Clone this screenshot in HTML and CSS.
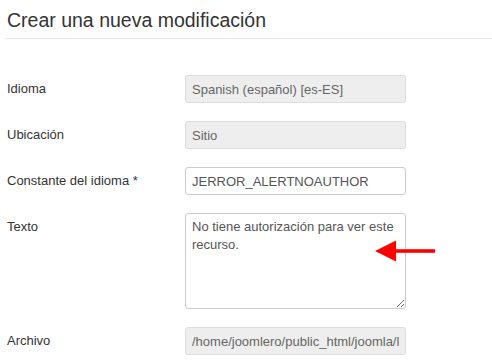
FILE: index.html
```
<!DOCTYPE html>
<html lang="es">
  <head>
    <meta charset="UTF-8" />
    <meta name="viewport" content="width=device-width, initial-scale=1.0" />
    <title>Crear una nueva modificación</title>
    <link rel="stylesheet" href="styles.css">
  </head>
  <body>
    <form class="override-form">
      <h2 class="form-title">Crear una nueva modificación</h2>

      <div class="control-group">
        <label class="control-label" for="language">Idioma</label>
        <div class="controls">
          <input type="text" id="language" class="field" value="Spanish (español) [es-ES]" disabled />
        </div>
      </div>

      <div class="control-group">
        <label class="control-label" for="client">Ubicación</label>
        <div class="controls">
          <input type="text" id="client" class="field" value="Sitio" disabled />
        </div>
      </div>

      <div class="control-group">
        <label class="control-label" for="key">Constante del idioma *</label>
        <div class="controls">
          <input type="text" id="key" class="field" value="JERROR_ALERTNOAUTHOR" />
        </div>
      </div>

      <div class="control-group">
        <label class="control-label" for="override">Texto</label>
        <div class="controls">
          <textarea id="override" class="field field-text">No tiene autorización para ver este recurso.</textarea>
          <!-- flecha roja encima del textarea -->
          <svg class="pointer" width="60" height="22" viewBox="0 0 60 22">
            <polygon points="0,11 21,0.5 21,21.5" fill="#ff0000" />
            <rect x="21" y="9.2" width="39" height="3.6" fill="#ff0000" />
          </svg>
        </div>
      </div>

      <div class="control-group">
        <label class="control-label" for="file">Archivo</label>
        <div class="controls">
          <input type="text" id="file" class="field" value="/home/joomlero/public_html/joomla/language/overrides/es-ES.override.ini" disabled />
        </div>
      </div>
    </form>
  </body>
</html>
```

FILE: styles.css
```
body {
  margin: 0;
  background: #fff;
  font-family: "Liberation Sans", Arial, sans-serif;
  color: #333;
}

.override-form {
  padding-left: 6px;
}

.form-title {
  margin: 0 0 36px;
  padding: 8px 0 6px 1px;
  font-size: 19.5px;
  font-weight: normal;
  line-height: 24px;
  color: #333;
  border-bottom: 1px solid #e5e5e5;
}

.control-group {
  display: grid;
  grid-template-columns: 179px 221px;
  margin-bottom: 18px;
}

.control-label {
  padding: 5px 0 0 1px;
  font-size: 13px;
  line-height: 18px;
  color: #333;
}

.controls {
  position: relative;
}

.field {
  display: block;
  box-sizing: border-box;
  width: 221px;
  height: 28px;
  margin: 0;
  padding: 0 6px;
  font-family: "Liberation Sans", Arial, sans-serif;
  font-size: 13px;
  color: #555;
  background: #fff;
  border: 1px solid #ccc;
  border-radius: 3px;
  outline: none;
}

.field:disabled {
  background: #eee;
  color: #666;
  border-color: #ddd;
}

.field-text {
  height: 96px;
  padding: 4px 6px;
  line-height: 18px;
  resize: vertical;
}

.pointer {
  position: absolute;
  left: 190px;
  top: 27px;
}
```
